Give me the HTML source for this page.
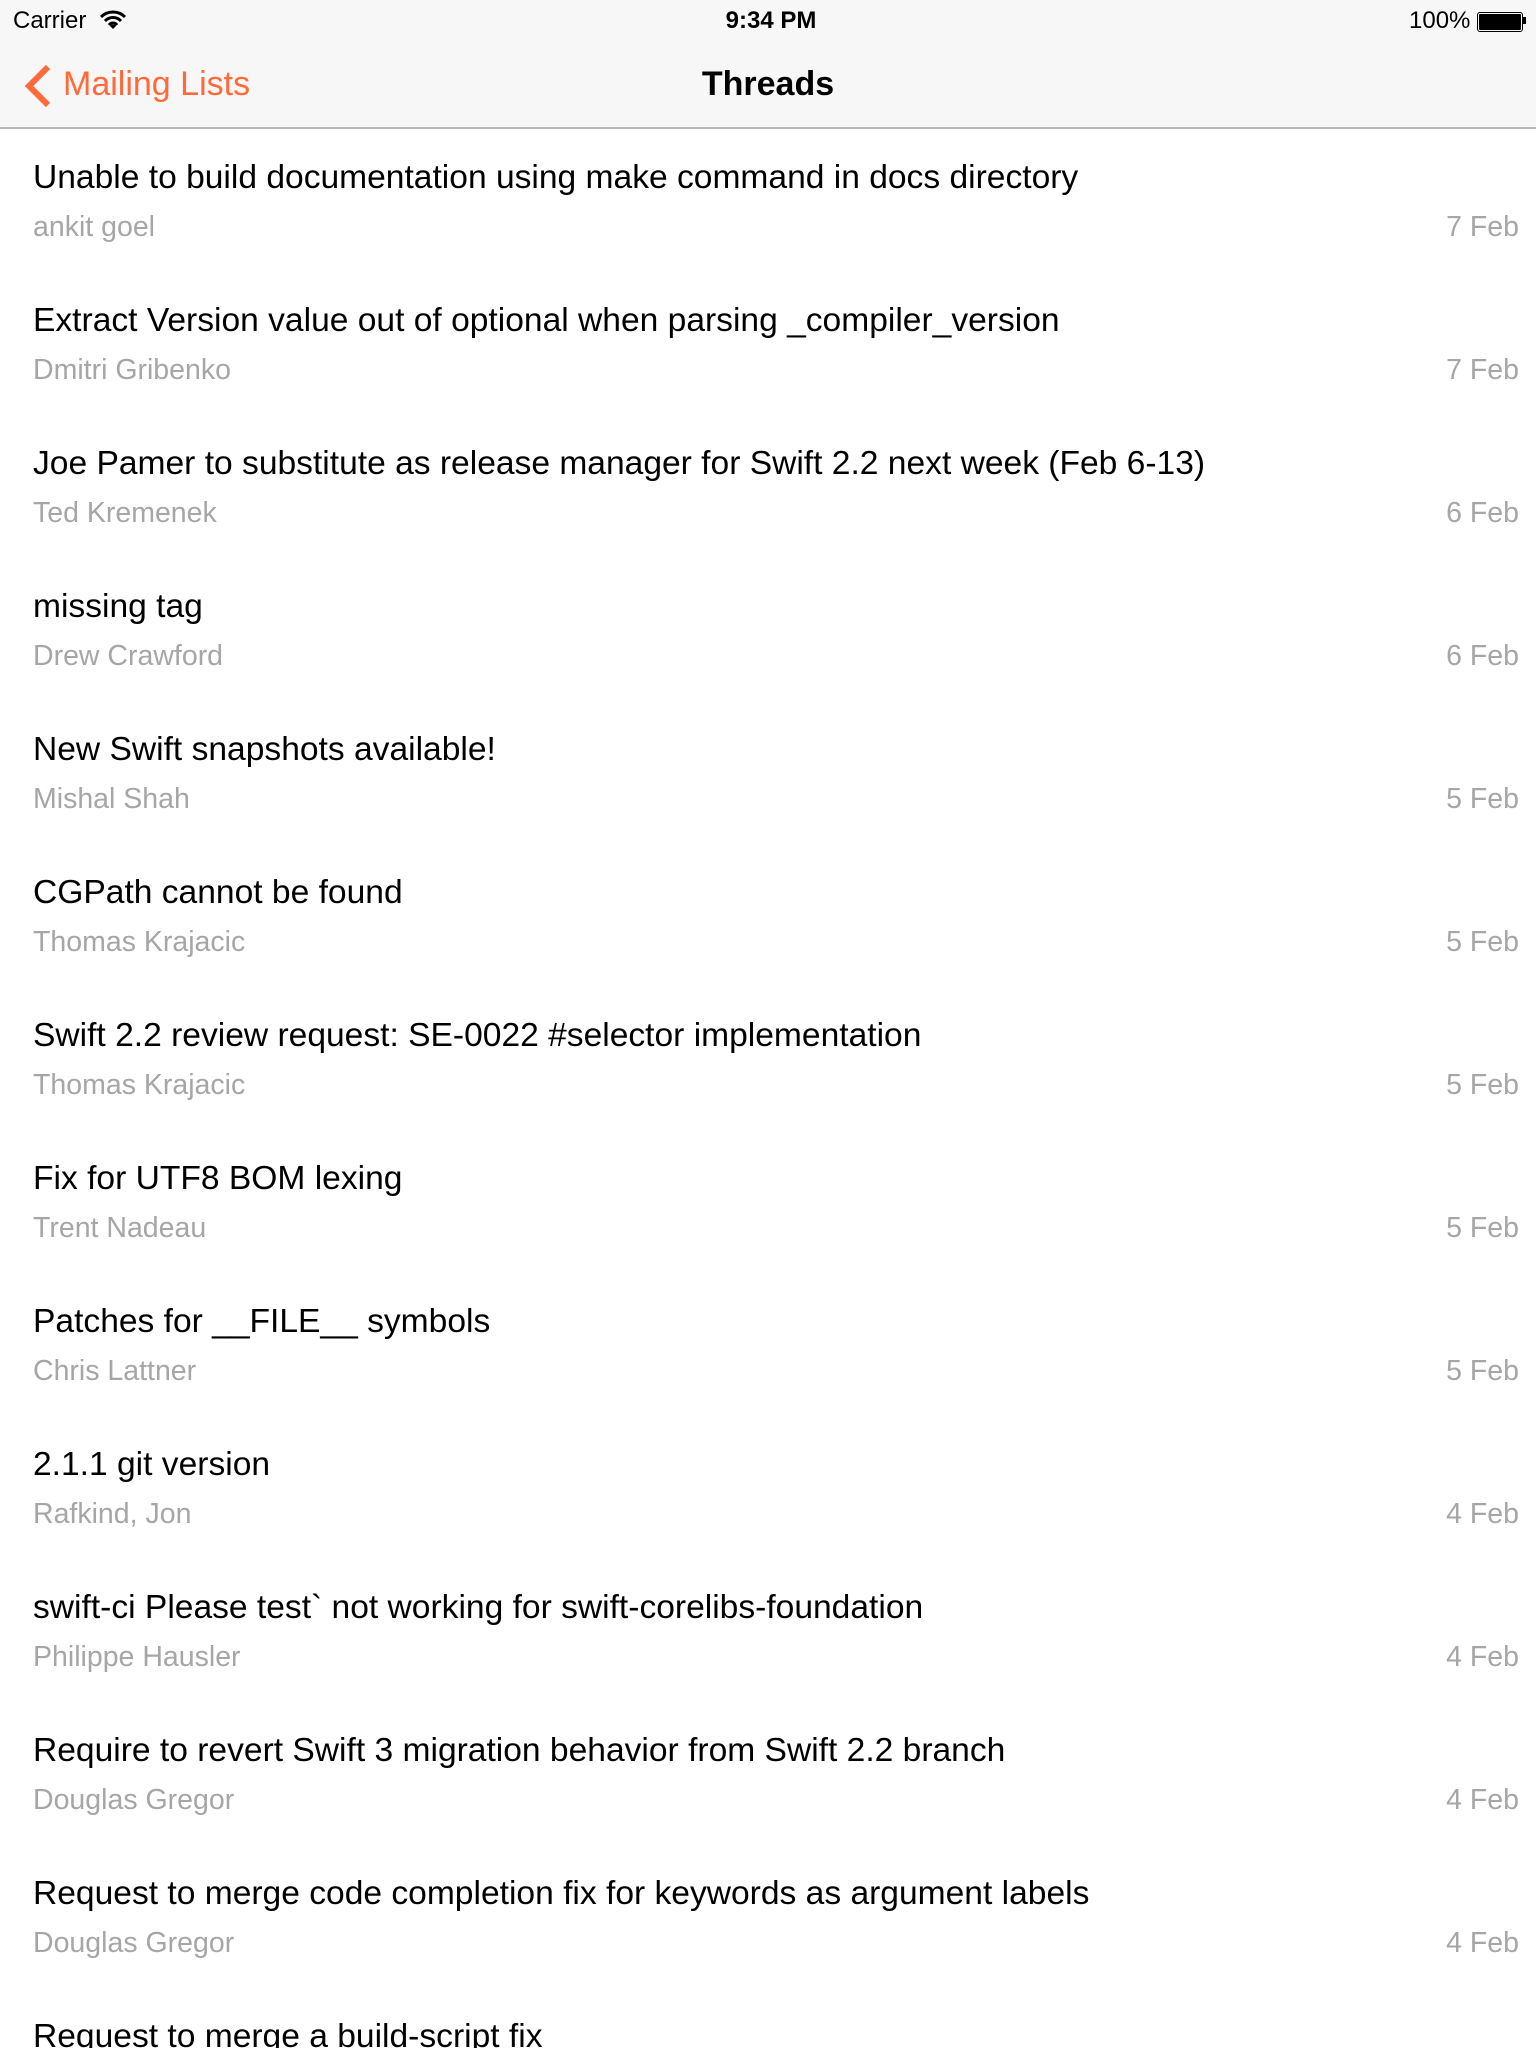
<!DOCTYPE html>
<html><head><meta charset="utf-8"><style>
html{overflow:hidden}
body{margin:0;width:1536px;height:2048px;overflow:hidden;background:#fff;font-family:"Liberation Sans",sans-serif;position:relative}
.hdr{position:absolute;left:0;top:0;width:1536px;height:127px;background:#f7f7f7;border-bottom:2px solid #b8b8b8;overflow:hidden}
.st{position:absolute;top:7px;font-size:24px;color:#000}
.t{position:absolute;left:33px;font-size:33.6px;color:#000;white-space:nowrap;line-height:40px}
.a{position:absolute;left:33px;font-size:28.5px;color:#a6a6a6;white-space:nowrap;line-height:34px}
.d{position:absolute;right:17px;font-size:28.5px;color:#a6a6a6;line-height:34px}
</style></head><body>
<div class="hdr">
<div class="st" style="left:13px">Carrier</div>
<svg style="position:absolute;left:100px;top:10px" width="26" height="20" viewBox="0 0 26 20"><path d="M1 7a17 17 0 0 1 24 0M5 11a11 11 0 0 1 16 0M9 15a5 5 0 0 1 8 0" stroke="#000" stroke-width="3" fill="none"/><path d="M13 19l-3-3a4 4 0 0 1 6 0z" fill="#000"/></svg>
<div class="st" style="left:6px;width:1530px;text-align:center;font-weight:bold">9:34 PM</div>
<div class="st" style="left:1409px">100%</div>
<div style="position:absolute;left:1477px;top:12px;width:42px;height:16px;border:1.5px solid #000;border-radius:3px;padding:1px"><div style="width:100%;height:100%;background:#000;border-radius:1px"></div></div>
<div style="position:absolute;left:1523px;top:17px;width:3px;height:7px;background:#000"></div>
<svg style="position:absolute;left:24px;top:64px" width="28" height="44" viewBox="0 0 28 44"><path d="M24 3L5 22l19 19" stroke="#ff6a3a" stroke-width="6" fill="none"/></svg>
<div style="position:absolute;left:63px;top:65px;font-size:34px;color:#ff6a3a">Mailing Lists</div>
<div style="position:absolute;left:0;width:1536px;text-align:center;top:65px;font-size:34px;font-weight:bold">Threads</div>
</div>
<div class="t" style="top:158px">Unable to build documentation using make command in docs directory</div><div class="a" style="top:210px">ankit goel</div><div class="d" style="top:210px">7 Feb</div>
<div class="t" style="top:301px">Extract Version value out of optional when parsing _compiler_version</div><div class="a" style="top:353px">Dmitri Gribenko</div><div class="d" style="top:353px">7 Feb</div>
<div class="t" style="top:444px">Joe Pamer to substitute as release manager for Swift 2.2 next week (Feb 6-13)</div><div class="a" style="top:496px">Ted Kremenek</div><div class="d" style="top:496px">6 Feb</div>
<div class="t" style="top:587px">missing tag</div><div class="a" style="top:639px">Drew Crawford</div><div class="d" style="top:639px">6 Feb</div>
<div class="t" style="top:730px">New Swift snapshots available!</div><div class="a" style="top:782px">Mishal Shah</div><div class="d" style="top:782px">5 Feb</div>
<div class="t" style="top:873px">CGPath cannot be found</div><div class="a" style="top:925px">Thomas Krajacic</div><div class="d" style="top:925px">5 Feb</div>
<div class="t" style="top:1016px">Swift 2.2 review request: SE-0022 #selector implementation</div><div class="a" style="top:1068px">Thomas Krajacic</div><div class="d" style="top:1068px">5 Feb</div>
<div class="t" style="top:1159px">Fix for UTF8 BOM lexing</div><div class="a" style="top:1211px">Trent Nadeau</div><div class="d" style="top:1211px">5 Feb</div>
<div class="t" style="top:1302px">Patches for __FILE__ symbols</div><div class="a" style="top:1354px">Chris Lattner</div><div class="d" style="top:1354px">5 Feb</div>
<div class="t" style="top:1445px">2.1.1 git version</div><div class="a" style="top:1497px">Rafkind, Jon</div><div class="d" style="top:1497px">4 Feb</div>
<div class="t" style="top:1588px">swift-ci Please test` not working for swift-corelibs-foundation</div><div class="a" style="top:1640px">Philippe Hausler</div><div class="d" style="top:1640px">4 Feb</div>
<div class="t" style="top:1731px">Require to revert Swift 3 migration behavior from Swift 2.2 branch</div><div class="a" style="top:1783px">Douglas Gregor</div><div class="d" style="top:1783px">4 Feb</div>
<div class="t" style="top:1874px">Request to merge code completion fix for keywords as argument labels</div><div class="a" style="top:1926px">Douglas Gregor</div><div class="d" style="top:1926px">4 Feb</div>
<div class="t" style="top:2017px">Request to merge a build-script fix</div>
</body></html>
